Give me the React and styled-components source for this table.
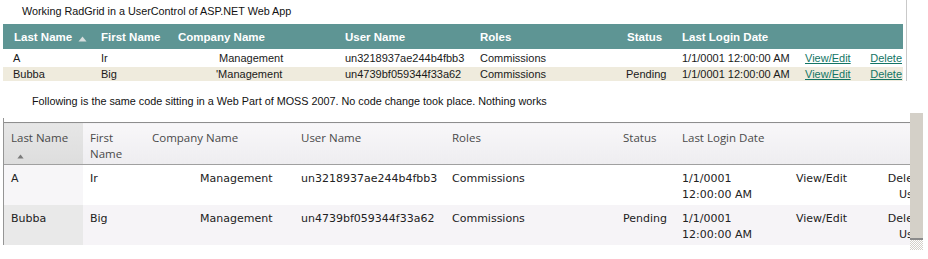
import React from "react";
import styled, { createGlobalStyle } from "styled-components";

const GlobalStyle = createGlobalStyle`
    html, body {
        margin:0;
        padding:0;
        background:#ffffff;
    }
    body {
        width:928px;
        height:259px;
        overflow:hidden;
        font-family:"Liberation Sans", Arial, sans-serif;
    }
`;

const Page = styled.div`
    width:928px;
    height:259px;
    overflow:hidden;
`;

const Caption = styled.div`
    padding-left:${(p) => p.$indent}px;
    font-family:"Liberation Sans", Arial, sans-serif;
    font-size:10.8px;
    line-height:14px;
    color:#111;
    white-space:nowrap;
`;

const TopSection = styled.div`
    width:903px;
    padding-left:3px;
    border-right:1px solid #c9c9c9;
`;

const TopTitle = styled(Caption)`
    height:18px;
    padding-top:4px;
    margin-bottom:2px;
`;

const RadTable = styled.table`
    width:900px;
    table-layout:fixed;
    border-collapse:collapse;
    font-family:"Liberation Sans", Arial, sans-serif;
`;

const RadHead = styled.th`
    height:25px;
    padding:0 0 0 ${(p) => p.$pad ?? 4}px;
    background:#5e9594;
    color:#ffffff;
    font-size:11.5px;
    font-weight:bold;
    text-align:left;
    white-space:nowrap;
`;

const RadRow = styled.tr`
    height:${(p) => (p.$alt ? 14 : 18)}px;
    background:${(p) => (p.$alt ? "#efebdd" : "#ffffff")};
`;

const RadCell = styled.td`
    padding:0 ${(p) => (p.$align === "right" ? 1 : 0)}px 0 ${(p) => p.$pad ?? 4}px;
    font-size:11px;
    line-height:14px;
    color:#1a1a1a;
    text-align:${(p) => p.$align || "left"};
    white-space:nowrap;
    overflow:hidden;
`;

const RadLink = styled.a`
    color:#137565;
    text-decoration:underline;
`;

const SortUp = styled.svg`
    margin-left:6px;
    vertical-align:-1px;
`;

const MossNote = styled(Caption)`
    margin-top:13px;
    height:14px;
`;

const MossSection = styled.div`
    display:flex;
    margin-top:5px;
`;

const Viewport = styled.div`
    width:907px;
    margin-left:3px;
    padding-top:5px;
    overflow:hidden;
`;

const Frame = styled.div`
    border-left:1px solid #959595;
    padding-top:4px;
`;

const MossTable = styled.table`
    width:927px;
    table-layout:fixed;
    border-collapse:collapse;
`;

const MossHead = styled.th`
    height:34px;
    padding:7px 4px 0 7px;
    vertical-align:top;
    text-align:left;
    font-family:"Open Sans", "Noto Sans", sans-serif;
    font-size:11.5px;
    font-weight:normal;
    line-height:16px;
    color:#4a4a4a;
    border-top:1px solid #8e8e8e;
    border-bottom:1px solid #a0a0a0;
    background:${(p) =>
        p.$sorted
            ? "linear-gradient(#e6e6e6, #dddddd)"
            : "linear-gradient(#f8f7f9, #eeedf0)"};
`;

const MossRow = styled.tr`
    background:${(p) => (p.$alt ? "#f6f4f7" : "#ffffff")};
`;

const MossCell = styled.td`
    height:34px;
    padding:6px 7px 0 ${(p) => p.$pad ?? 7}px;
    vertical-align:top;
    text-align:${(p) => p.$align || "left"};
    font-family:"DejaVu Sans", Verdana, sans-serif;
    font-size:11px;
    line-height:16px;
    color:#222;
    white-space:nowrap;
    background:${(p) => (p.$sorted ? (p.$alt ? "#e9e9e9" : "#f7f6f8") : "transparent")};
`;

const Scrollbar = styled.div`
    width:13px;
    display:flex;
    flex-direction:column;
`;

const Track = styled.div`
    height:125px;
    background:#d4d0c8;
    border-bottom:2px solid #8a8a8a;
`;

const Grip = styled.div`
    height:10px;
    background:repeating-conic-gradient(#d4d0c8 0 25%, #ffffff 0 50%) 0 0 / 2px 2px;
`;

const topCols = [94, 77, 167, 135, 147, 55, 123, 61, 41];
const mossCols = [79, 62, 149, 151, 171, 59, 114, 71, 71];

const users = [
    { last: "A", first: "Ir", company: "Management", user: "un3218937ae244b4fbb3", roles: "Commissions", status: "" },
    { last: "Bubba", first: "Big", company: "Management", user: "un4739bf059344f33a62", roles: "Commissions", status: "Pending" },
];

const SortArrow = ({ color, w = 9, h = 6 }) => (
    <SortUp width={w} height={h} viewBox="0 0 9 6">
        <polygon points="4.5,0.5 8.5,5.5 0.5,5.5" fill={color} />
    </SortUp>
);

const App = () => {
    return (
        <Page>
            <GlobalStyle />
            <TopSection>
                <TopTitle $indent={19}>Working RadGrid in a UserControl of ASP.NET Web App</TopTitle>
                <RadTable>
                    <colgroup>
                        {topCols.map((w, i) => <col key={i} style={{ width: w }} />)}
                    </colgroup>
                    <thead>
                        <tr>
                            <RadHead $pad={11}>Last Name<SortArrow color="#d6dede" /></RadHead>
                            <RadHead>First Name</RadHead>
                            <RadHead>Company Name</RadHead>
                            <RadHead>User Name</RadHead>
                            <RadHead>Roles</RadHead>
                            <RadHead>Status</RadHead>
                            <RadHead>Last Login Date</RadHead>
                            <RadHead />
                            <RadHead />
                        </tr>
                    </thead>
                    <tbody>
                        {users.map((u, i) => (
                            <RadRow key={u.user} $alt={i % 2 === 1}>
                                <RadCell $pad={10}>{u.last}</RadCell>
                                <RadCell>{u.first}</RadCell>
                                <RadCell $pad={i ? 42 : 45}>{i ? "'" : ""}{u.company}</RadCell>
                                <RadCell>{u.user}</RadCell>
                                <RadCell>{u.roles}</RadCell>
                                <RadCell $pad={3}>{u.status}</RadCell>
                                <RadCell>1/1/0001 12:00:00 AM</RadCell>
                                <RadCell><RadLink>View/Edit</RadLink></RadCell>
                                <RadCell $align="right"><RadLink>Delete</RadLink></RadCell>
                            </RadRow>
                        ))}
                    </tbody>
                </RadTable>
            </TopSection>

            <MossNote $indent={32}>Following is the same code sitting in a Web Part of MOSS 2007. No code change took place. Nothing works</MossNote>

            <MossSection>
                <Viewport>
                    <Frame>
                        <MossTable>
                            <colgroup>
                                {mossCols.map((w, i) => <col key={i} style={{ width: w }} />)}
                            </colgroup>
                            <thead>
                                <tr>
                                    <MossHead $sorted>
                                        Last Name
                                        <br />
                                        <SortArrow color="#7a7a7a" w={7} h={5} />
                                    </MossHead>
                                    <MossHead>First Name</MossHead>
                                    <MossHead>Company Name</MossHead>
                                    <MossHead>User Name</MossHead>
                                    <MossHead>Roles</MossHead>
                                    <MossHead>Status</MossHead>
                                    <MossHead>Last Login Date</MossHead>
                                    <MossHead />
                                    <MossHead />
                                </tr>
                            </thead>
                            <tbody>
                                {users.map((u, i) => (
                                    <MossRow key={u.user} $alt={i % 2 === 1}>
                                        <MossCell $sorted $alt={i % 2 === 1}>{u.last}</MossCell>
                                        <MossCell>{u.first}</MossCell>
                                        <MossCell $pad={55}>{u.company}</MossCell>
                                        <MossCell>{u.user}</MossCell>
                                        <MossCell>{u.roles}</MossCell>
                                        <MossCell>{u.status}</MossCell>
                                        <MossCell>1/1/0001<br />12:00:00 AM</MossCell>
                                        <MossCell>View/Edit</MossCell>
                                        <MossCell $align="right">Delete<br />User</MossCell>
                                    </MossRow>
                                ))}
                            </tbody>
                        </MossTable>
                    </Frame>
                </Viewport>
                <Scrollbar>
                    <Track />
                    <Grip />
                </Scrollbar>
            </MossSection>
        </Page>
    );
};

export default App;
